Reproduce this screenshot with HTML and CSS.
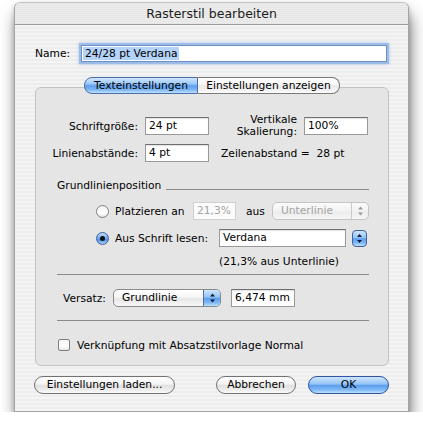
FILE: index.html
```html
<!DOCTYPE html>
<html lang="de">
<head>
    <meta charset="UTF-8">
    <title>Rasterstil bearbeiten</title>
    <link rel="stylesheet" href="styles.css">
</head>
<body>
    <div class="window">
        <div class="titlebar">Rasterstil bearbeiten</div>

        <div class="content">
            <div class="name-row">
                <span class="name-label">Name:</span>
                <div class="field name-field"><span class="selection">24/28 pt Verdana</span></div>
            </div>

            <div class="tabs">
                <span class="tab tab-first active">Texteinstellungen</span>
                <span class="tab tab-last">Einstellungen anzeigen</span>
            </div>

            <div class="box">
                <div class="row row-first">
                    <span class="label label-main">Schriftgröße:</span>
                    <div class="field small">24 pt</div>
                    <span class="label label-second">Vertikale<br>Skalierung:</span>
                    <div class="field small">100%</div>
                </div>

                <div class="row row-second">
                    <span class="label label-main">Linienabstände:</span>
                    <div class="field small">4 pt</div>
                    <span class="result">Zeilenabstand =&nbsp; 28 pt</span>
                </div>

                <div class="heading">
                    <span>Grundlinienposition</span>
                    <div class="heading-line"></div>
                </div>

                <div class="radio-row radio-row-first">
                    <span class="radio"></span>
                    <span class="radio-label place-label">Platzieren an</span>
                    <div class="field disabled percent">21,3%</div>
                    <span class="aus">aus</span>
                    <div class="popup disabled from-popup">
                        <span class="popup-text">Unterlinie</span>
                        <span class="popup-arrows">
                            <svg width="7" height="10" viewBox="0 0 7 10"><path d="M3.5 0.5 L6 3.5 H1 Z M3.5 9.5 L6 6.5 H1 Z" fill="#9a9a9a"/></svg>
                        </span>
                    </div>
                </div>

                <div class="radio-row radio-row-second">
                    <span class="radio on"><span class="radio-dot"></span></span>
                    <span class="radio-label read-label">Aus Schrift lesen:</span>
                    <div class="field font-field">Verdana</div>
                    <span class="stepper">
                        <svg width="7" height="11" viewBox="0 0 7 11"><path d="M3.5 1 L6 4 H1 Z M3.5 10 L6 7 H1 Z" fill="#10203a"/></svg>
                    </span>
                </div>

                <div class="note">(21,3% aus Unterlinie)</div>

                <div class="separator"></div>

                <div class="versatz-row">
                    <span class="versatz-label">Versatz:</span>
                    <div class="popup versatz-popup">
                        <span class="popup-text">Grundlinie</span>
                        <span class="popup-arrows blue">
                            <svg width="7" height="10" viewBox="0 0 7 10"><path d="M3.5 0.5 L6 3.5 H1 Z M3.5 9.5 L6 6.5 H1 Z" fill="#10203a"/></svg>
                        </span>
                    </div>
                    <div class="field small offset-field">6,474 mm</div>
                </div>

                <div class="separator separator-lower"></div>

                <div class="check-row">
                    <span class="checkbox"></span>
                    <span>Verknüpfung mit Absatzstilvorlage Normal</span>
                </div>
            </div>

            <div class="buttons">
                <span class="btn btn-load">Einstellungen laden...</span>
                <span class="btn btn-cancel">Abbrechen</span>
                <span class="btn btn-ok">OK</span>
            </div>
        </div>
    </div>
</body>
</html>
```

FILE: styles.css
```css
body {
    margin: 0;
    background: #fff;
    font-family: "DejaVu Sans", "Noto Sans", sans-serif;
    font-size: 10.7px;
    color: #000;
}

.window {
    width: 395px;
    height: 410px;
    margin: 2px 0 0 14px;
    box-sizing: border-box;
    border: 1px solid #a4a4a4;
    border-top-color: #c4c4c4;
    border-radius: 6px 6px 0 0;
    background: repeating-linear-gradient(to bottom, #ededed 0, #ededed 2px, #f4f4f4 2px, #f4f4f4 4px);
    box-shadow: 2px 12px 16px rgba(0, 0, 0, 0.5), 0 2px 5px rgba(0, 0, 0, 0.2);
}

.titlebar {
    height: 21px;
    line-height: 22px;
    border-bottom: 1px solid #9c9c9c;
    border-radius: 5px 5px 0 0;
    text-align: center;
    font-size: 12.5px;
    color: #1c1c1c;
    background: repeating-linear-gradient(to bottom, #e6e6e6 0, #e6e6e6 1px, #ececec 1px, #ececec 2px);
}

.content {
    padding: 0 19px 0 20px;
}

/* name */

.name-row {
    display: flex;
    align-items: center;
    margin-top: 20px;
}

.name-label {
    width: 46px;
}

.field {
    height: 18px;
    box-sizing: border-box;
    border: 1px solid #999;
    border-top-color: #6f6f6f;
    background: #fff;
    box-shadow: inset 0 1px 1px rgba(0, 0, 0, 0.12);
    padding: 0 3px;
    line-height: 16px;
    white-space: nowrap;
}

.name-field {
    width: 306px;
    height: 17px;
    padding-left: 1px;
    border-color: #6d8fc4;
    box-shadow: 0 0 0 2px #9cbde8, 0 0 3px 2px rgba(80, 130, 210, 0.45);
}

.selection {
    background: #b4d3fa;
    padding: 0 1px 0 2px;
}

/* tabs */

.tabs {
    position: relative;
    display: flex;
    width: 256px;
    margin: 15px auto -7px;
}

.tab {
    height: 17px;
    box-sizing: border-box;
    border: 1px solid #7a7a7a;
    line-height: 15px;
    text-align: center;
    background: linear-gradient(#ffffff, #f6f6f6 45%, #e9e9e9 52%, #f3f3f3 85%, #ffffff);
}

.tab-first {
    width: 114px;
    border-radius: 8px 0 0 8px;
}

.tab-last {
    width: 142px;
    border-left: none;
    border-radius: 0 8px 8px 0;
}

.tab.active {
    border-color: #4c6ea9;
    background: linear-gradient(#d0e6fd, #9ac8f8 40%, #5f9fee 52%, #7cb6f4 78%, #bfe2fd);
}

/* group box */

.box {
    height: 279px;
    box-sizing: border-box;
    border: 1px solid #c2c2c2;
    border-radius: 6px;
    background: #e5e5e5;
    padding-top: 29px;
}

.row {
    display: flex;
    align-items: center;
    height: 18px;
}

.row-second {
    margin-top: 9px;
}

.label {
    text-align: right;
    margin-right: 7px;
}

.label-main {
    width: 102px;
}

.label-second {
    width: 88px;
    line-height: 12px;
}

.small {
    width: 64px;
}

.result {
    margin-left: 12px;
}

.heading {
    display: flex;
    height: 14px;
    line-height: 14px;
    margin: 17px 19px 0 21px;
}

.heading-line {
    flex: 1;
    align-self: flex-end;
    margin: 0 0 3px 5px;
    border-top: 1px solid #8a8a8a;
}

.radio-row {
    display: flex;
    align-items: center;
    height: 18px;
    padding-left: 60px;
}

.radio-row-first {
    margin-top: 9px;
}

.radio-row-second {
    margin-top: 9px;
}

.radio {
    display: flex;
    align-items: center;
    justify-content: center;
    width: 13px;
    height: 13px;
    box-sizing: border-box;
    border: 1px solid #7f7f7f;
    border-radius: 50%;
    background: linear-gradient(#f2f2f2, #ffffff 60%, #e6e6e6);
    margin-right: 6px;
}

.radio.on {
    border-color: #3f5f9c;
    background: linear-gradient(#c3ddfb, #6aa6ef 50%, #4f92e8 60%, #a6d2fb);
}

.radio-dot {
    width: 5px;
    height: 5px;
    border-radius: 50%;
    background: #111;
}

.place-label {
    width: 78px;
}

.read-label {
    width: 104px;
}

.field.disabled {
    border-color: #cfcfcf;
    background: #fbfbfb;
    box-shadow: none;
    color: #a3a3a3;
}

.percent {
    width: 43px;
}

.aus {
    margin-left: 10px;
    width: 26px;
}

.popup {
    display: flex;
    height: 18px;
    box-sizing: border-box;
    border: 1px solid #8a8a8a;
    border-radius: 5px;
    background: linear-gradient(#ffffff, #f5f5f5 45%, #e6e6e6 55%, #f8f8f8);
    line-height: 16px;
}

.popup-text {
    flex: 1;
    padding-left: 8px;
}

.popup-arrows {
    display: flex;
    align-items: center;
    justify-content: center;
    width: 16px;
    border-left: 1px solid #c9c9c9;
    border-radius: 0 4px 4px 0;
}

.popup-arrows.blue {
    border-left-color: #4e6fa8;
    background: linear-gradient(#cfe5fd, #92c3f7 45%, #5d9eed 52%, #7cb6f4 78%, #bde0fd);
}

.popup.disabled {
    border-color: #c4c4c4;
    color: #a3a3a3;
    background: linear-gradient(#fafafa, #f3f3f3 50%, #ececec 55%, #f6f6f6);
}

.from-popup {
    width: 97px;
}

.font-field {
    width: 127px;
}

.stepper {
    display: flex;
    align-items: center;
    justify-content: center;
    width: 15px;
    height: 17px;
    box-sizing: border-box;
    margin-left: 6px;
    border: 1px solid #3e5f9c;
    border-radius: 4px;
    background: linear-gradient(#cfe5fd, #92c3f7 45%, #5d9eed 52%, #7cb6f4 78%, #bde0fd);
}

.note {
    height: 14px;
    line-height: 14px;
    margin-top: 8px;
    padding-left: 183px;
}

.separator {
    margin: 5px 19px 0 21px;
    border-top: 1px solid #8a8a8a;
}

.separator-lower {
    margin-top: 13px;
}

.versatz-row {
    display: flex;
    align-items: center;
    height: 18px;
    margin-top: 14px;
    padding-left: 27px;
}

.versatz-label {
    width: 50px;
}

.versatz-popup {
    width: 108px;
}

.offset-field {
    margin-left: 10px;
}

.check-row {
    display: flex;
    align-items: center;
    height: 14px;
    margin-top: 17px;
    padding-left: 22px;
}

.checkbox {
    width: 12px;
    height: 12px;
    box-sizing: border-box;
    border: 1px solid #7f7f7f;
    border-radius: 2px;
    background: linear-gradient(#f2f2f2, #ffffff 60%, #e4e4e4);
    margin-right: 7px;
}

/* buttons */

.buttons {
    display: flex;
    margin: 10px 0 0 -1px;
}

.btn {
    height: 18px;
    box-sizing: border-box;
    border: 1px solid #727272;
    border-radius: 9px;
    line-height: 16px;
    text-align: center;
    background: linear-gradient(#fefefe, #f3f3f3 45%, #e0e0e0 52%, #ececec 80%, #fbfbfb);
}

.btn-load {
    width: 141px;
}

.btn-cancel {
    width: 80px;
    margin-left: auto;
}

.btn-ok {
    width: 81px;
    margin-left: 12px;
    border-color: #2f55a0;
    background: linear-gradient(#cfe5fd, #92c3f7 45%, #5d9eed 52%, #7cb6f4 78%, #bde0fd);
}
```
